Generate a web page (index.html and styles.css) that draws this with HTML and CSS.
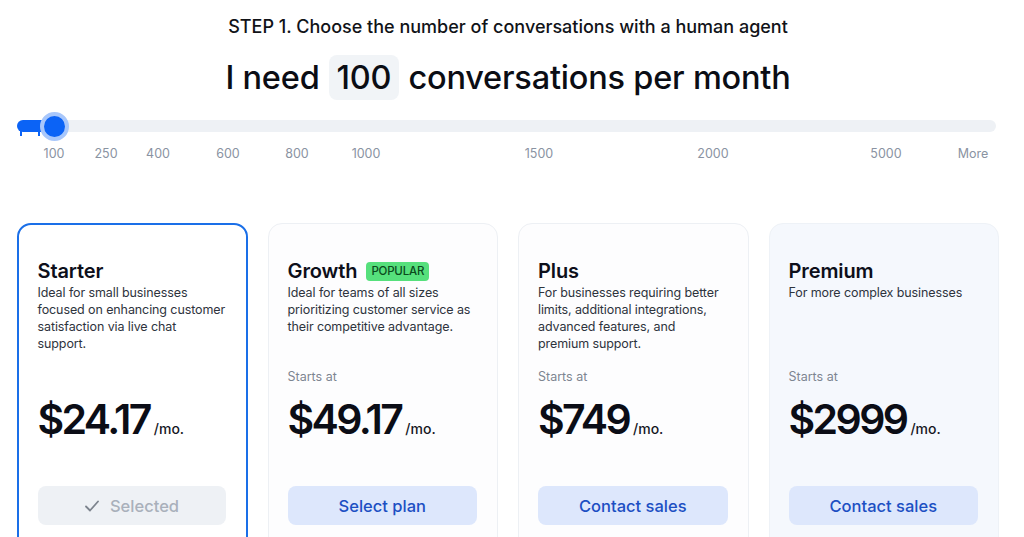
FILE: index.html
```html
<!DOCTYPE html>
<html lang="en">
<head>
<meta charset="utf-8">
<title>Pricing</title>
<link rel="stylesheet" href="styles.css">
</head>
<body>
<main class="page">
  <h2 class="step">STEP 1. Choose the number of conversations with a human agent</h2>
  <h1 class="need">I need <span class="count">100</span> conversations per month</h1>

  <div class="slider">
    <div class="track">
      <div class="fill"></div>
      <span class="foot foot-a"></span>
      <span class="foot foot-b"></span>
      <div class="thumb"></div>
    </div>
    <div class="ticks">
      <span class="tick" style="left:37px">100</span>
      <span class="tick" style="left:89px">250</span>
      <span class="tick" style="left:141px">400</span>
      <span class="tick" style="left:211px">600</span>
      <span class="tick" style="left:280px">800</span>
      <span class="tick" style="left:349px">1000</span>
      <span class="tick" style="left:522px">1500</span>
      <span class="tick" style="left:696px">2000</span>
      <span class="tick" style="left:869px">5000</span>
      <span class="tick" style="left:956px">More</span>
    </div>
  </div>

  <section class="plans">
    <article class="card card-selected">
      <h3 class="title">Starter</h3>
      <p class="desc">Ideal for small businesses focused on enhancing customer satisfaction via live chat support.</p>
      <p class="starts hidden">Starts at</p>
      <p class="price"><span class="amount">$24.17</span><span class="per">/mo.</span></p>
      <button class="btn btn-selected">
        <svg class="check" width="16" height="14" viewBox="0 0 16 14" aria-hidden="true"><path d="M2 7.5 L6 11.5 L14 2.5" fill="none" stroke="#7d848e" stroke-width="1.8" stroke-linecap="round" stroke-linejoin="round"/></svg>
        Selected
      </button>
    </article>

    <article class="card">
      <h3 class="title">Growth <span class="badge">POPULAR</span></h3>
      <p class="desc">Ideal for teams of all sizes prioritizing customer service as their competitive advantage.</p>
      <p class="starts">Starts at</p>
      <p class="price"><span class="amount">$49.17</span><span class="per">/mo.</span></p>
      <button class="btn">Select plan</button>
    </article>

    <article class="card">
      <h3 class="title">Plus</h3>
      <p class="desc">For businesses requiring better limits, additional integrations, advanced features, and premium support.</p>
      <p class="starts">Starts at</p>
      <p class="price"><span class="amount">$749</span><span class="per">/mo.</span></p>
      <button class="btn">Contact sales</button>
    </article>

    <article class="card card-premium">
      <h3 class="title">Premium</h3>
      <p class="desc">For more complex businesses</p>
      <p class="starts">Starts at</p>
      <p class="price"><span class="amount">$2999</span><span class="per">/mo.</span></p>
      <button class="btn">Contact sales</button>
    </article>
  </section>
</main>
</body>
</html>
```

FILE: styles.css
```css
html, body {
  margin: 0;
  padding: 0;
  overflow: hidden;
  background: #ffffff;
}

body {
  font-family: "Inter", "Noto Sans", "Liberation Sans", sans-serif;
  color: #0d0f1a;
}

.page {
  padding: 14px 25px 0 17px;
}

.step {
  margin: 0;
  text-align: center;
  font-size: 18px;
  font-weight: 500;
  line-height: 26px;
  letter-spacing: 0;
  color: #111318;
}

.need {
  margin: 15px 0 0 0;
  display: flex;
  justify-content: center;
  align-items: center;
  gap: 9px;
  font-size: 32.5px;
  font-weight: 500;
  line-height: 45px;
  letter-spacing: -0.2px;
  color: #0b0d14;
}

.count {
  display: inline-block;
  padding: 0 8px;
  height: 45px;
  background: #f1f4f7;
  border-radius: 8px;
}

.slider {
  margin-top: 20px;
  padding-right: 3px;
}

.track {
  position: relative;
  height: 12px;
  background: #eef1f5;
  border-radius: 6px;
}

.fill {
  width: 30px;
  height: 12px;
  background: #0b63f6;
  border-radius: 6px 0 0 6px;
}

.foot {
  position: absolute;
  top: 11px;
  width: 2px;
  height: 5px;
  background: #0b63f6;
}

.foot-a { left: 3px; }
.foot-b { left: 21px; }

.thumb {
  position: absolute;
  left: 23px;
  top: -8px;
  width: 21px;
  height: 21px;
  border-radius: 50%;
  background: #0b63f6;
  border: 4px solid #a8c7fb;
}

.ticks {
  position: relative;
  height: 20px;
  margin-top: 13px;
}

.tick {
  position: absolute;
  top: 0;
  transform: translateX(-50%);
  font-size: 12.5px;
  line-height: 18px;
  color: #8a93a2;
}

.plans {
  margin-top: 58px;
  display: grid;
  grid-template-columns: repeat(4, 1fr);
  gap: 20px;
}

.card {
  height: 340px;
  box-sizing: border-box;
  padding: 35px 20px 0 19px;
  border: 1.5px solid #edf0f4;
  border-radius: 14px;
  background: #fdfdfe;
}

.card-selected {
  border: 2px solid #1a6fe8;
  padding-left: 18.5px;
  padding-top: 34px;
  background: #ffffff;
}

.card-premium {
  background: #f5f8fd;
  border-color: #eef2f7;
}

.title {
  margin: 0;
  display: flex;
  align-items: center;
  gap: 9px;
  font-size: 20px;
  font-weight: 600;
  line-height: 24px;
  letter-spacing: -0.1px;
  color: #0d0f1a;
}

.badge {
  display: inline-block;
  padding: 0 5px;
  height: 19px;
  line-height: 19px;
  font-size: 11.5px;
  font-weight: 500;
  letter-spacing: -0.2px;
  color: #0b4a1c;
  background: #56e07c;
  border-radius: 4px;
}

.desc {
  margin: 1px 0 0 0;
  height: 76px;
  font-size: 12.5px;
  line-height: 17px;
  color: #2e343d;
  letter-spacing: -0.1px;
}

.starts {
  margin: 8px 0 0 0;
  font-size: 12.5px;
  line-height: 17px;
  color: #7d8591;
}

.hidden {
  visibility: hidden;
}

.price {
  margin: 10px 0 0 0;
  display: flex;
  align-items: baseline;
  gap: 4px;
  line-height: 48px;
}

.amount {
  font-size: 41px;
  font-weight: 600;
  letter-spacing: -2.6px;
  color: #0b0d16;
}

.per {
  font-size: 14px;
  font-weight: 500;
  color: #15171f;
}

.btn {
  margin-top: 33px;
  width: 100%;
  height: 39px;
  display: flex;
  align-items: center;
  justify-content: center;
  gap: 10px;
  border: none;
  border-radius: 8px;
  background: #dde7fc;
  color: #1c4fc3;
  font-family: inherit;
  font-size: 16.5px;
  font-weight: 500;
  cursor: pointer;
}

.btn-selected {
  background: #eef1f5;
  color: #a9b0bb;
}

.check {
  display: block;
}
```
